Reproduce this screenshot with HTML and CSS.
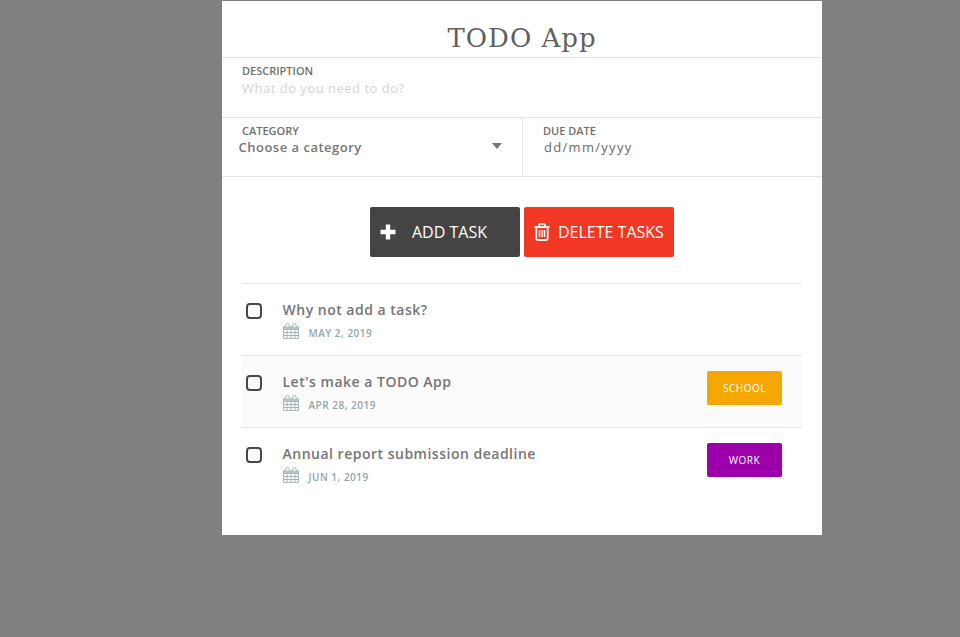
FILE: index.html
```html
<!DOCTYPE html>
<html lang="en">
<head>
<meta charset="utf-8">
<title>TODO App</title>
<link rel="stylesheet" href="styles.css">
</head>
<body>
<main class="card">
  <h1 class="title">TODO App</h1>
  <section class="field field-desc">
    <label class="label">DESCRIPTION</label>
    <div class="placeholder">What do you need to do?</div>
  </section>
  <section class="split">
    <div class="field field-cat">
      <label class="label">CATEGORY</label>
      <div class="value value-cat">Choose a category</div>
      <span class="caret"></span>
    </div>
    <div class="field field-date">
      <label class="label">DUE DATE</label>
      <div class="value value-date">dd/mm/yyyy</div>
    </div>
  </section>
  <section class="actions">
    <button class="btn btn-add">
      <svg class="plus" width="16" height="16" viewBox="0 0 16 16"><path d="M5.800 0.5h4.400v5.300h5.300v4.400h-5.300v5.300H5.800v-5.300H0.500V5.800h5.300z" fill="#fff"/></svg>
      <span>ADD TASK</span>
    </button>
    <button class="btn btn-del">
      <svg class="trash" width="16" height="18" viewBox="0 0 16 18" fill="none" stroke="#fff"><path d="M0.500 4h15" stroke-width="1.800"/><path d="M5 3.500V2.200Q5 1 6.200 1h3.600Q11 1 11 2.200v1.300" stroke-width="1.600"/><path d="M2.300 4v11.500Q2.300 17 3.800 17h8.400q1.500 0 1.500-1.500V4" stroke-width="1.800"/><path d="M5.500 7v7M8 7v7M10.500 7v7" stroke-width="1.500"/></svg>
      <span>DELETE TASKS</span>
    </button>
  </section>
  <ul class="tasks">
    <li class="task">
      <span class="check"></span>
      <div class="info">
        <div class="name">Why not add a task?</div>
        <div class="date">
          <svg class="cal" width="16" height="16" viewBox="0 0 16 16"><use href="#cal"/></svg>
          <span>MAY 2, 2019</span>
        </div>
      </div>
    </li>
    <li class="task task-alt">
      <span class="check"></span>
      <div class="info">
        <div class="name">Let's make a TODO App</div>
        <div class="date">
          <svg class="cal" width="16" height="16" viewBox="0 0 16 16"><use href="#cal"/></svg>
          <span>APR 28, 2019</span>
        </div>
      </div>
      <span class="tag tag-school">SCHOOL</span>
    </li>
    <li class="task">
      <span class="check"></span>
      <div class="info">
        <div class="name">Annual report submission deadline</div>
        <div class="date">
          <svg class="cal" width="16" height="16" viewBox="0 0 16 16"><use href="#cal"/></svg>
          <span>JUN 1, 2019</span>
        </div>
      </div>
      <span class="tag tag-work">WORK</span>
    </li>
  </ul>
</main>
<svg class="defs" width="0" height="0">
  <symbol id="cal" viewBox="0 0 16 16">
    <path d="M0.500 3.500h15v12h-15zM0.500 6.500h15M0.500 9.500h15M0.500 12.500h15M4 6.500v9M8 6.500v9M12 6.500v9" fill="none" stroke="#a4b6ba" stroke-width="1"/>
    <path d="M0.500 3h15v3.500h-15z" fill="#b4c4c7"/>
    <path d="M3 4V2q0-1.500 1.500-1.500T6 2v2M10 4V2q0-1.500 1.500-1.500T13 2v2" stroke="#a4b6ba" stroke-width="1" fill="#fff"/>
  </symbol>
</svg>
</body>
</html>
```
FILE: styles.css
```css
* { box-sizing: border-box; }
html, body { margin: 0; height: 100%; }
body {
  background: #808080;
  font-family: "Open Sans", sans-serif;
  overflow: hidden;
}
.card {
  width: 600px;
  height: 534px;
  margin: 1px 0 0 222px;
  background: #fff;
}
.title {
  margin: 0;
  height: 56px;
  padding-top: 19px;
  text-align: center;
  font-family: "DejaVu Serif", serif;
  font-size: 26px;
  line-height: 36px;
  font-weight: 400;
  color: #5f5f5f;
  letter-spacing: 1px;
}
.field { position: relative; }
.field-desc {
  height: 61px;
  padding: 6px 20px 0;
  border-top: 1px solid #e4e4e4;
  border-bottom: 1px solid #e4e4e4;
}
.label {
  display: block;
  font-size: 11px;
  line-height: 13px;
  font-weight: 600;
  color: #6f6f6f;
}
.placeholder {
  margin-top: 2px;
  font-size: 13px;
  line-height: 19px;
  color: #d3d3d3;
  letter-spacing: 0.5px;
}
.split {
  display: flex;
  height: 59px;
  border-bottom: 1px solid #e4e4e4;
}
.field-cat { width: 300px; padding: 6px 20px 0; }
.field-date {
  flex: 1;
  padding: 6px 20px 0;
  border-left: 1px solid #e4e4e4;
}
.value {
  margin-top: 1px;
  font-size: 13px;
  line-height: 18px;
  font-weight: 600;
  color: #757575;
  letter-spacing: 0.5px;
}
.value-cat { margin-left: -3.500px; }
.value-date { margin-left: 1px; font-weight: 500; color: #6b6b6b; letter-spacing: 1.300px; }
.caret {
  position: absolute;
  left: 270px;
  top: 25px;
  border-left: 5px solid transparent;
  border-right: 5px solid transparent;
  border-top: 6px solid #757575;
}
.actions {
  display: flex;
  justify-content: center;
  gap: 4px;
  padding-top: 30px;
  height: 106px;
}
.btn {
  display: flex;
  align-items: center;
  width: 150px;
  height: 50px;
  border: 0;
  border-radius: 2px;
  padding: 0;
  color: #fff;
  font-family: "Open Sans", sans-serif;
  font-size: 16px;
  line-height: 22px;
}
.btn-add { background: #444444; padding-left: 10px; }
.btn-add .plus { margin-right: 16px; }
.btn-del { background: #f03825; padding-left: 10px; }
.btn-del .trash { margin-right: 8px; }
.tasks {
  list-style: none;
  margin: 0 20px;
  padding: 0;
}
.task {
  display: flex;
  height: 72px;
  padding: 0 20px 0 4px;
  border-top: 1px solid #e4e4e4;
}
.task-alt { background: #fbfbfb; }
.check {
  flex: none;
  width: 16px;
  height: 16px;
  margin-top: 19px;
  border: 2px solid #4d4545;
  border-radius: 4px;
}
.info { flex: 1; margin-left: 20.500px; padding-top: 16px; }
.name {
  font-size: 14px;
  line-height: 20px;
  font-weight: 600;
  color: #757575;
  letter-spacing: 0.5px;
}
.date {
  display: flex;
  align-items: flex-start;
  margin-top: 3px;
  height: 20px;
  font-size: 10px;
  line-height: 20px;
  font-weight: 600;
  color: #95a5a6;
  letter-spacing: 0.5px;
}
.cal { margin-right: 10px; }
.tag {
  flex: none;
  align-self: flex-start;
  width: 75px;
  height: 34px;
  margin-top: 15px;
  border-radius: 2px;
  color: #fff;
  font-size: 10px;
  line-height: 34px;
  text-align: center;
  letter-spacing: 0.500px;
}
.tag-school { background: #f4a700; }
.tag-work { background: #9c00a8; }
.defs { position: absolute; }
```
